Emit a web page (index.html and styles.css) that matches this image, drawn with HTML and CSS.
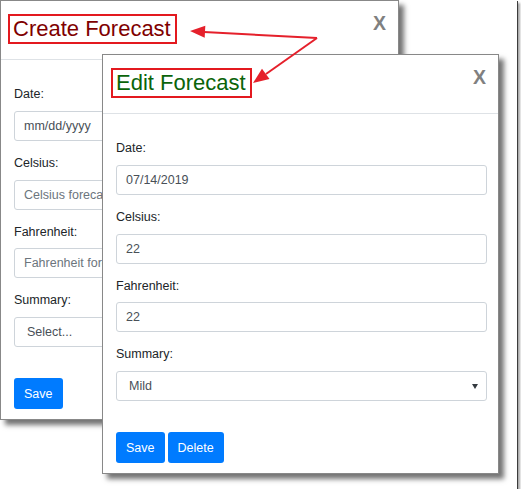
FILE: index.html
```html
<!DOCTYPE html>
<html>
	<head>
		<title>Forecasts</title>
		<link rel="stylesheet" href="styles.css">
	</head>
	<body>
		<div class="frame">
			<div class="modal create">
				<div class="modal-header">
					<h5 class="title title-create">Create Forecast</h5>
					<span class="close">X</span>
				</div>
				<div class="modal-body">
					<label>Date:</label>
					<div class="field">mm/dd/yyyy</div>
					<label>Celsius:</label>
					<div class="field placeholder">Celsius forecast</div>
					<label>Fahrenheit:</label>
					<div class="field placeholder">Fahrenheit forecast</div>
					<label>Summary:</label>
					<div class="field select"><span>Select...</span></div>
					<div class="buttons">
						<button>Save</button>
					</div>
				</div>
			</div>

			<div class="modal edit">
				<div class="modal-header">
					<h5 class="title title-edit">Edit Forecast</h5>
					<span class="close">X</span>
				</div>
				<div class="modal-body">
					<label>Date:</label>
					<div class="field">07/14/2019</div>
					<label>Celsius:</label>
					<div class="field">22</div>
					<label>Fahrenheit:</label>
					<div class="field">22</div>
					<label>Summary:</label>
					<div class="field select">
						<span>Mild</span>
						<svg class="caret" width="6" height="5" viewBox="0 0 6 5"><path d="M0 0H6L3 5Z" fill="#343a40"/></svg>
					</div>
					<div class="buttons">
						<button>Save</button>
						<button>Delete</button>
					</div>
				</div>
			</div>

			<svg class="arrows" width="517" height="489" viewBox="0 0 517 489">
				<g stroke="#e5202b" stroke-width="2" fill="none">
					<line x1="317" y1="38" x2="204" y2="32" />
					<line x1="317" y1="38" x2="266" y2="74" />
				</g>
				<g fill="#e5202b">
					<polygon points="190,31 205.3,25.8 204.7,37.8" />
					<polygon points="253,83 269.5,79 262,68.8" />
				</g>
			</svg>
		</div>
	</body>
</html>
```

FILE: styles.css
```css
body {
	margin: 0;
	background: #fff;
	font-family: "Liberation Sans", Arial, sans-serif;
}

.frame {
	position: relative;
	width: 517px;
	height: 489px;
	background: #fff;
	box-shadow: 1px 1px 0 #3c3c3c, 3px 3px 2px rgba(0, 0, 0, 0.35);
}

.modal {
	position: absolute;
	box-sizing: border-box;
	height: 420px;
	background: #fff;
	border: 1px solid #888;
	box-shadow: 5px 5px 5px rgba(0, 0, 0, 0.55);
}
.create { left: 0; top: 0; width: 399px; }
.edit { left: 102px; top: 54px; width: 397px; }

.modal-header {
	display: flex;
	justify-content: space-between;
	align-items: flex-start;
	box-sizing: border-box;
	height: 59px;
	padding: 13px 12px 0 7px;
	border-bottom: 1px solid #dee2e6;
}
.edit .modal-header { padding-left: 8px; }

.title {
	margin: 0;
	padding: 0 4px 0 3px;
	border: 2px solid #e3191f;
	font-size: 22px;
	font-weight: normal;
	line-height: 26px;
}
.title-create { color: #800000; }
.title-edit { color: #0a640a; }

.close {
	margin-top: -1px;
	font-size: 19.5px;
	font-weight: bold;
	line-height: 20px;
	color: #808080;
}

.modal-body {
	display: flex;
	flex-direction: column;
	padding: 25px 11px 0 13px;
	font-size: 12.5px;
	color: #212529;
}

label {
	line-height: 18.75px;
	margin-bottom: 7px;
}

.field {
	display: flex;
	align-items: center;
	box-sizing: border-box;
	height: 30px;
	margin-bottom: 13px;
	padding: 0 9px;
	border: 1px solid #ced4da;
	border-radius: 3px;
	color: #495057;
	white-space: nowrap;
	overflow: hidden;
}
.field.placeholder { color: #6c757d; }
.field.select {
	justify-content: space-between;
	padding: 0 8px 0 12px;
	margin-bottom: 31px;
}

.buttons {
	display: flex;
	gap: 3px;
}
.buttons button {
	height: 31px;
	padding: 0 10px;
	border: none;
	border-radius: 3px;
	background: #007bff;
	color: #fff;
	font-family: "Liberation Sans", Arial, sans-serif;
	font-size: 12.5px;
}

.arrows {
	position: absolute;
	left: 0;
	top: 0;
	pointer-events: none;
}
```
